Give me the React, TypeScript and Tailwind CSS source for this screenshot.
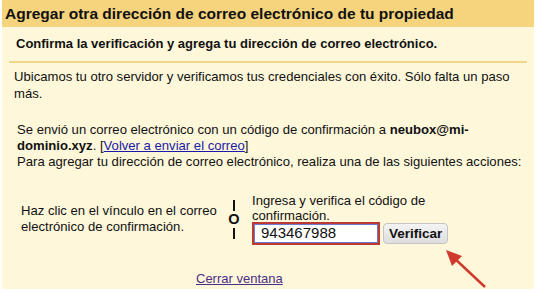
export default function App() {
  return (
    <div className="relative w-[538px] h-[292px] bg-white font-['Liberation_Sans',Arial,sans-serif] text-[#111]">
      <div className="ml-[2px] w-[532px] h-[289px] bg-[#fef7da]">
        <div className="h-[27px] bg-[#f6d47d] px-[3px] flex items-center text-[15.5px] font-bold leading-none">
          Agregar otra dirección de correo electrónico de tu propiedad
        </div>
        <div className="mx-[7px] h-[36px] border-b-2 border-[#f0d58a] px-[7px] flex items-center text-[13px] font-bold">
          Confirma la verificación y agrega tu dirección de correo electrónico.
        </div>
        <p className="mt-[5px] ml-[12px] w-[500px] text-[13.1px] leading-[17px]">
          Ubicamos tu otro servidor y verificamos tus credenciales con éxito. Sólo falta un paso más.
        </p>
        <div className="mt-[20px] ml-[15px] w-[512px] text-[13.1px] leading-[16px]">
          Se envió un correo electrónico con un código de confirmación a <b>neubox@mi-dominio.xyz</b>. [<a className="text-[#1a1aa6] underline">Volver a enviar el correo</a>]
          <br />
          Para agregar tu dirección de correo electrónico, realiza una de las siguientes acciones:
        </div>
        <div className="mt-[23px] flex items-center text-[13.1px]">
          <div className="ml-[19px] w-[206px] leading-[16px]">
            Haz clic en el vínculo en el correo electrónico de confirmación.
          </div>
          <div className="ml-[1px] w-[12px] flex flex-col items-center">
            <div className="h-[11px] w-[1.5px] bg-[#111]" />
            <span className="my-[3px] text-[14.5px] font-bold leading-[11px]">O</span>
            <div className="h-[11px] w-[1.5px] bg-[#111]" />
          </div>
          <div className="ml-[12px] flex flex-col">
            <div className="leading-[15px] w-[200px]">Ingresa y verifica el código de confirmación.</div>
            <div className="mt-[-1px] flex items-center gap-[3px]">
              <div className="w-[128px] h-[23px] border-2 border-[#bd3a34] bg-white">
                <div className="h-full border border-[#6b7bd0] flex items-center px-[6px] text-[15px]">
                  943467988
                </div>
              </div>
              <button className="h-[21px] px-[5px] rounded-[4px] border border-[#c4c4c4] bg-gradient-to-b from-[#f4f4f4] to-[#dedede] text-[13.5px] font-bold leading-none">
                Verificar
              </button>
            </div>
          </div>
        </div>
        <div className="mt-[21px] ml-[194px]">
          <a className="text-[13px] text-[#4a2f86] underline">Cerrar ventana</a>
        </div>
      </div>
      <svg className="absolute left-0 top-0" width="538" height="292">
        <line x1="485" y1="287" x2="453" y2="257" stroke="#cf3a2c" strokeWidth="2.5" />
        <polygon points="446,250 462,256 452,266" fill="#cf3a2c" />
      </svg>
    </div>
  );
}
